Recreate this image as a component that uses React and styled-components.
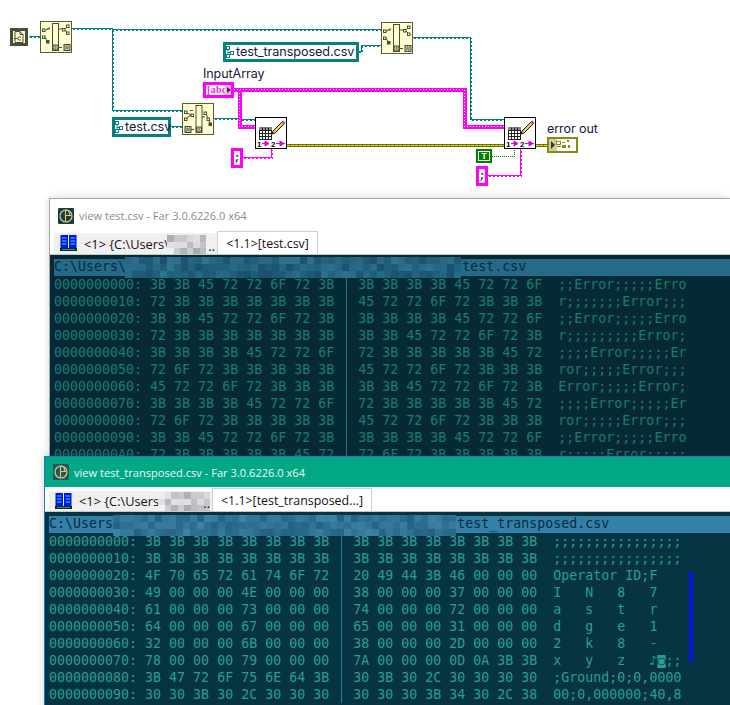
import React from 'react';
import styled, { createGlobalStyle } from 'styled-components';

const Global = createGlobalStyle`
  html, body { margin: 0; padding: 0; background: #fff; }
  body { font-family: "Open Sans", "Liberation Sans", sans-serif; }
`;

const Page = styled.div`
  position: relative;
  width: 730px;
  height: 705px;
  overflow: hidden;
  background: #fff;
`;

/* ---------- block diagram ---------- */
const Diagram = styled.div`
  position: relative;
  height: 198px;
`;
const WireLayer = styled.svg`
  position: absolute;
  inset: 0;
  width: 730px;
  height: 198px;
`;
const Trace = styled.path`
  fill: none;
  stroke: ${p => p.$color};
  stroke-width: ${p => p.$w || 1}px;
  stroke-dasharray: ${p => p.$dash || 'none'};
  stroke-dashoffset: ${p => p.$offset || 0};
  shape-rendering: crispEdges;
`;
const Node = styled.div`
  position: absolute;
  left: ${p => p.$x}px;
  top: ${p => p.$y}px;
  width: ${p => p.$w}px;
  height: ${p => p.$h}px;
  box-sizing: border-box;
  display: flex;
  align-items: center;
  justify-content: center;
`;
const PathNode = styled(Node)`
  background: #ffffcf;
  border: 1px solid #5a5a3c;
`;
const WriteNode = styled(Node)`
  background: #fff;
  border: 1px solid #000;
`;
const StartNode = styled(Node)`
  background: #ffffd4;
  border: 3px solid #4c4c38;
`;
const PathConst = styled(Node)`
  border: 3px solid #0a7f7f;
  background: #fff;
  justify-content: flex-start;
  gap: 2px;
  padding-left: 0;
  font: 400 12.7px/14px Inter, "Open Sans", sans-serif;
  letter-spacing: -0.1px;
  color: #12203a;
  white-space: nowrap;
`;
const Label = styled.div`
  position: absolute;
  left: ${p => p.$x}px;
  top: ${p => p.$y}px;
  font: 400 12.6px/15px Inter, "Open Sans", sans-serif;
  letter-spacing: -0.1px;
  color: #12203a;
  white-space: nowrap;
`;
const ArrayConst = styled(Node)`
  border: 3px solid #ff00ff;
  background: #fff;
  justify-content: flex-start;
  padding-left: 1px;
  color: #ee22ee;
  font: 700 10px/10px "Liberation Serif", serif;
  letter-spacing: 0.3px;
  white-space: nowrap;
`;
const ArrayArrow = styled.span`
  position: absolute;
  right: 0;
  top: 0;
  bottom: 0;
  width: 6px;
  background: #ffb0ff;
  display: flex;
  align-items: center;
  justify-content: flex-end;
  &::after {
    content: "";
    border-left: 4px solid #333;
    border-top: 3px solid transparent;
    border-bottom: 3px solid transparent;
  }
`;
const SemiConst = styled(Node)`
  border: 3px solid #ff00ff;
  background: #fff;
  color: #222;
  font: 700 11px/12px "Liberation Mono", monospace;
`;
const BoolConst = styled(Node)`
  background: #007f00;
  border: 2px solid #007f00;
  color: #fff;
  font: 700 8.5px/9px "Liberation Sans", sans-serif;
  &::before {
    content: "";
    position: absolute;
    inset: 0;
    border: 1px solid #fff;
  }
`;
const ErrorTerm = styled(Node)`
  border: 1px solid #8a8a10;
  outline: 1px solid #8a8a10;
  outline-offset: -2px;
  background: #fff;
`;

/* ---------- Far windows ---------- */
const Window = styled.section`
  position: absolute;
  left: ${p => p.$x}px;
  top: ${p => p.$y}px;
  right: 0;
  bottom: ${p => p.$bottom}px;
  box-sizing: border-box;
  display: flex;
  flex-direction: column;
  background: #fff;
  border: 1px solid ${p => (p.$active ? '#1f78d8' : '#a8a8a8')};
  border-right: 0;
  border-bottom: 0;
  box-shadow: 0 0 9px rgba(0, 0, 0, 0.16);
`;
const TitleBar = styled.header`
  flex: none;
  height: ${p => p.$h}px;
  display: flex;
  align-items: center;
  gap: 5px;
  padding-left: 8px;
  background: ${p => (p.$active ? '#02a884' : '#fff')};
  color: ${p => (p.$active ? '#eafaf5' : '#8c8c8c')};
  font-size: 11.1px;
  white-space: nowrap;
`;
const TabStrip = styled.nav`
  flex: none;
  height: ${p => p.$h}px;
  display: flex;
  align-items: flex-end;
  padding-left: 4px;
  background: #fff;
  border-bottom: 1px solid #c8c8c8;
  box-sizing: border-box;
`;
const PassiveTab = styled.div`
  width: 163px;
  height: ${p => p.$h}px;
  box-sizing: border-box;
  background: #f0f0f0;
  display: flex;
  align-items: center;
  position: relative;
  padding-left: 6px;
  gap: 7px;
  font-size: 12.8px;
  color: #111;
  white-space: nowrap;
  overflow: hidden;
`;
const ActiveTab = styled.div`
  width: ${p => p.$w}px;
  height: ${p => p.$h}px;
  box-sizing: border-box;
  background: #fff;
  border: 1px solid #cfcfcf;
  border-bottom: 0;
  display: flex;
  align-items: center;
  justify-content: center;
  font-size: 12.4px;
  color: #111;
  white-space: nowrap;
`;
const Ellipsis = styled.span`
  position: absolute;
  right: 2px;
  bottom: 2px;
  line-height: 12px;
`;
const Viewer = styled.main`
  flex: 1;
  min-height: 0;
  overflow: hidden;
  background: ${p => (p.$active ? '#063443' : '#052a36')};
  color: ${p => (p.$active ? '#2a9e90' : '#1c7c72')};
  padding: 4px 0 0 4px;
  font: 400 13.3px/17px "DejaVu Sans Mono", monospace;
`;
const PathBar = styled.div`
  position: relative;
  height: 17px;
  line-height: 15px;
  background: ${p => (p.$active ? '#3380a8' : '#256a88')};
  color: #0b2a3c;
  white-space: pre;
`;
const Mosaic = styled.div`
  position: absolute;
  left: ${p => p.$left}px;
  top: ${p => p.$top}px;
  display: grid;
  grid-template-columns: repeat(${p => p.$cols}, ${p => p.$size}px);
  grid-auto-rows: ${p => p.$size}px;
`;
const Pixel = styled.i`
  display: block;
`;
const HexRow = styled.div`
  display: flex;
  height: 17px;
  white-space: pre;
`;
const Cell = styled.span`
  flex: none;
  width: ${p => p.$ch}ch;
`;
const Divider = styled.span`
  flex: none;
  width: 1ch;
  position: relative;
  &::after {
    content: "";
    position: absolute;
    left: 50%;
    top: 0;
    bottom: 0;
    width: 1px;
    background: ${p => (p.$active ? '#1f7f96' : '#257a86')};
  }
`;
const ScrollMark = styled.div`
  position: absolute;
  left: 689px;
  top: 572px;
  width: 4px;
  height: 91px;
  background: #0818e4;
`;

/* ---------- wires ---------- */
const Wire = ({ d, color }) => (
  <>
    <Trace d={d} $color={color} />
    <Trace d={d} $color={color} $dash="2 2" transform="translate(1 1)" />
  </>
);
const ThickPink = ({ d }) => (
  <>
    <Trace d={d} $color="#ff00ff" $w={4} />
    <Trace d={d} $color="#ffffff" $dash="1 2" />
  </>
);
const ErrorWire = ({ d }) => (
  <>
    <Trace d={d} $color="#6e6e00" $w={3} />
    <Trace d={d} $color="#e6e610" $dash="3 1" />
  </>
);

const Wires = () => (
  <WireLayer viewBox="0 0 730 198">
    <Wire color="#007f7f" d="M28.5 36.5H40" />
    <Wire color="#007f7f" d="M72 28.5H112.5V29.5H381" />
    <Wire color="#007f7f" d="M112.5 29V110.5H182" />
    <Wire color="#007f7f" d="M358 51.5H361.5V45.5H381" />
    <Wire color="#007f7f" d="M171 126.5H182" />
    <Wire color="#007f7f" d="M214 118.5H240V119.5H256" />
    <Wire color="#007f7f" d="M413 37.5H470.5V119.5H504" />
    <ThickPink d="M234 89.5H464.5V126.5H504" />
    <ThickPink d="M239.5 89.5V126.5H255" />
    <Wire color="#ff00ff" d="M243 157.5H271.5V149" />
    <Wire color="#ff00ff" d="M488 175.5H520.5V149" />
    <Trace d="M492 156.5H514.5V149" $color="#007f00" $dash="1 1" />
    <ErrorWire d="M287 145.5H504" />
    <ErrorWire d="M536 145.5H547" />
  </WireLayer>
);

/* ---------- icons ---------- */
const ink = '#4c4c30';
const Checker = ({ x, y, s = 6 }) => (
  <g>
    <rect x={x} y={y} width={s} height={s} fill="#8a8a70" stroke={ink} strokeWidth="1" />
    <rect x={x + 1} y={y + 1} width={s - 2} height={s - 2} fill="none" stroke="#e4e4c8" strokeDasharray="1 1" />
  </g>
);
const Sq = ({ x, y, fill }) => (
  <rect x={x} y={y} width="2.5" height="2.5" fill={fill ? ink : 'none'} stroke={ink} strokeWidth="1" />
);
const Arrow = ({ x, y }) => <path d={`M${x} ${y}h3M${x + 2} ${y - 2.5}l3 2.5-3 2.5z`} fill={ink} stroke={ink} strokeWidth="1" />;

const BuildPathIcon = () => (
  <svg width="30" height="30" viewBox="1 1 30 30">
    <Sq x="2.5" y="8" /><Sq x="2.5" y="15" /><Sq x="6.5" y="19.5" fill />
    <path d="M5 9.5l5-3M5 16l2 4" stroke={ink} fill="none" />
    <Arrow x="7" y="8" />
    <rect x="12.5" y="2.5" width="6" height="27" fill="#ffffcf" stroke={ink} />
    <Checker x={13} y={24} s={5} />
    <Arrow x="19" y="8" />
    <Sq x="26.5" y="4" /><Sq x="26.5" y="11" /><Sq x="22.5" y="7.5" />
    <path d="M25 8l2-2M25 9l2 2" stroke={ink} fill="none" />
    <Arrow x="19" y="26.5" />
    <Checker x={24} y={23.5} />
  </svg>
);
const StripPathIcon = () => (
  <svg width="30" height="30" viewBox="1 1 30 30">
    <Sq x="2.5" y="8" /><Sq x="2.5" y="15" /><Sq x="9" y="11" />
    <path d="M5 15l4-3M5 10l4 2" stroke={ink} fill="none" />
    <Arrow x="8" y="7.5" />
    <rect x="14" y="2.5" width="6" height="27" fill="#ffffcf" stroke={ink} />
    <Checker x={14.5} y={24} s={5} />
    <Checker x={3} y={23.5} />
    <Arrow x="9" y="26.5" />
    <Arrow x="20" y="14" />
    <Sq x="22" y="9" /><Sq x="25" y="15" /><Sq x="27" y="20" fill />
    <path d="M24 11l2 4M27 17l1 3" stroke={ink} fill="none" />
  </svg>
);
const WriteIcon = () => (
  <svg width="30" height="30" viewBox="1 1 30 30">
    <rect x="4.5" y="10.5" width="12" height="12" fill="#fff" stroke="#222" />
    <rect x="4" y="10" width="13" height="3" fill="#888" />
    <path d="M4.5 13.5h12M4.5 16.5h12M4.5 19.5h12M7.5 10.5v12M10.5 10.5v12M13.5 10.5v12" stroke="#222" />
    <path d="M18 14l10-10 2 2-10 10-3 1z" fill="#e8d840" stroke="#111" strokeWidth="1" />
    <path d="M26.5 5.5l2-2 2 2-2 2z" fill="#e050b0" />
    <text x="2" y="30" fontFamily="Liberation Sans, sans-serif" fontWeight="700" fontSize="8" fill="#000">1</text>
    <path d="M7 26.5h7M10 24v5l4-2.5z" stroke="#e000e0" fill="#e000e0" />
    <text x="16" y="30" fontFamily="Liberation Sans, sans-serif" fontWeight="700" fontSize="8" fill="#000">2</text>
    <path d="M21 26.5h9M25 24v5l4-2.5z" stroke="#e000e0" fill="#e000e0" />
  </svg>
);
const DocIcon = () => (
  <svg width="12" height="12" viewBox="0 0 12 12">
    <path d="M2 .5h5l3 3v8H2zM7 .5v3h3" fill="#ffffd4" stroke="#4c4c38" />
    <path d="M8 6H6L4 7.5 6 9h2M1 7.5h3" fill="none" stroke="#4c4c38" />
  </svg>
);
const PathGlyph = () => (
  <svg width="8" height="12" viewBox="0 0 8 12" style={{ flex: 'none' }}>
    <rect x="0.5" y="0.5" width="3" height="3" fill="none" stroke="#0a7f7f" />
    <rect x="0.5" y="8.5" width="3" height="3" fill="none" stroke="#0a7f7f" />
    <rect x="4.5" y="5.5" width="3" height="3" fill="none" stroke="#0a7f7f" />
    <path d="M2 3.5v5M2 6.5h2.5" stroke="#0a7f7f" />
  </svg>
);
const ErrorIcon = () => (
  <svg width="29" height="14" viewBox="0 0 29 14">
    <rect x="0" y="0" width="9" height="14" fill="#cfcf9a" />
    <path d="M3 3v8l4-4z" fill="#333" />
    <rect x="8.5" y="3.5" width="4" height="3" fill="none" stroke="#8a8a10" />
    <rect x="14" y="4" width="3" height="1" fill="#8a8a10" />
    <rect x="19" y="2" width="2" height="2" fill="#8a8a10" />
    <rect x="9" y="8" width="4" height="1" fill="#8a8a10" />
    <rect x="14" y="7" width="4" height="3" fill="#8a8a10" />
    <rect x="20" y="7" width="2" height="3" fill="#8a8a10" />
  </svg>
);
const FarLogo = ({ active }) => (
  <svg width="16" height="16" viewBox="0 0 16 16" style={{ flex: 'none' }}>
    <rect width="16" height="16" rx="1" fill={active ? '#1d5668' : '#123e52'} />
    <circle cx="8" cy="8" r="6" fill="none" stroke="#e8c860" strokeWidth="1.2" />
    <path d="M7.5 2v12M7.5 7.5h6M7.5 2a4 4 0 0 1 4 4v1.5" fill="none" stroke="#e8c860" strokeWidth="1.1" />
  </svg>
);
const PanelIcon = () => (
  <svg width="17" height="17" viewBox="0 0 17 17" style={{ flex: 'none' }}>
    <rect x="0.5" y="0" width="7.5" height="13" fill="#0014e8" />
    <rect x="9" y="0" width="7.5" height="13" fill="#0014e8" />
    <path d="M2 3h4.5M2 6h4.5M2 9h4.5M10.5 3H15M10.5 6H15M10.5 9H15" stroke="#38e0f0" />
    <rect x="0" y="13" width="17" height="3" fill="#0d2a2a" />
    <rect x="2" y="14" width="13" height="1" fill="#28a060" />
  </svg>
);

/* ---------- data ---------- */
const seeded = i => {
  const v = Math.sin(i * 12.9898 + 4.1) * 43758.5453;
  return v - Math.floor(v);
};
const PixelBand = ({ left, top, cols, rows, size, base, spread, grey }) => {
  const cells = [];
  for (let i = 0; i < cols * rows; i++) {
    const k = (seeded(i + left) - 0.5) * spread;
    const c = grey
      ? `rgb(${base[0] + k},${base[1] + k},${base[2] + k})`
      : `rgb(${base[0] + k * 0.7},${base[1] + k},${base[2] + k})`;
    cells.push(<Pixel key={i} style={{ background: c }} />);
  }
  return <Mosaic $left={left} $top={top} $cols={cols} $size={size}>{cells}</Mosaic>;
};

const rowsOld = [
  ['0000000000', '3B 3B 45 72 72 6F 72 3B', '3B 3B 3B 3B 45 72 72 6F', ';;Error;;;;;Erro'],
  ['0000000010', '72 3B 3B 3B 3B 3B 3B 3B', '45 72 72 6F 72 3B 3B 3B', 'r;;;;;;;Error;;;'],
  ['0000000020', '3B 3B 45 72 72 6F 72 3B', '3B 3B 3B 3B 45 72 72 6F', ';;Error;;;;;Erro'],
  ['0000000030', '72 3B 3B 3B 3B 3B 3B 3B', '3B 3B 45 72 72 6F 72 3B', 'r;;;;;;;;;Error;'],
  ['0000000040', '3B 3B 3B 3B 45 72 72 6F', '72 3B 3B 3B 3B 3B 45 72', ';;;;Error;;;;;Er'],
  ['0000000050', '72 6F 72 3B 3B 3B 3B 3B', '45 72 72 6F 72 3B 3B 3B', 'ror;;;;;Error;;;'],
  ['0000000060', '45 72 72 6F 72 3B 3B 3B', '3B 3B 45 72 72 6F 72 3B', 'Error;;;;;Error;'],
  ['0000000070', '3B 3B 3B 3B 45 72 72 6F', '72 3B 3B 3B 3B 3B 45 72', ';;;;Error;;;;;Er'],
  ['0000000080', '72 6F 72 3B 3B 3B 3B 3B', '45 72 72 6F 72 3B 3B 3B', 'ror;;;;;Error;;;'],
  ['0000000090', '3B 3B 45 72 72 6F 72 3B', '3B 3B 3B 3B 45 72 72 6F', ';;Error;;;;;Erro'],
  ['00000000A0', '72 3B 3B 3B 3B 3B 45 72', '72 6F 72 3B 3B 3B 3B 3B', 'r;;;;;Error;;;;;'],
];
const rowsNew = [
  ['0000000000', '3B 3B 3B 3B 3B 3B 3B 3B', '3B 3B 3B 3B 3B 3B 3B 3B', ';;;;;;;;;;;;;;;;'],
  ['0000000010', '3B 3B 3B 3B 3B 3B 3B 3B', '3B 3B 3B 3B 3B 3B 3B 3B', ';;;;;;;;;;;;;;;;'],
  ['0000000020', '4F 70 65 72 61 74 6F 72', '20 49 44 3B 46 00 00 00', 'Operator ID;F'],
  ['0000000030', '49 00 00 00 4E 00 00 00', '38 00 00 00 37 00 00 00', 'I   N   8   7'],
  ['0000000040', '61 00 00 00 73 00 00 00', '74 00 00 00 72 00 00 00', 'a   s   t   r'],
  ['0000000050', '64 00 00 00 67 00 00 00', '65 00 00 00 31 00 00 00', 'd   g   e   1'],
  ['0000000060', '32 00 00 00 6B 00 00 00', '38 00 00 00 2D 00 00 00', '2   k   8   -'],
  ['0000000070', '78 00 00 00 79 00 00 00', '7A 00 00 00 0D 0A 3B 3B', 'x   y   z   ♪◙;;'],
  ['0000000080', '3B 47 72 6F 75 6E 64 3B', '30 3B 30 2C 30 30 30 30', ';Ground;0;0,0000'],
  ['0000000090', '30 30 3B 30 2C 30 30 30', '30 30 30 3B 34 30 2C 38', '00;0,000000;40,8'],
];

const Far = ({ x, y, bottom, active, title, tabText, tabActive, tabW, path, rows, band, tabBand, titleH, stripH, tabH, activeH }) => (
  <Window $x={x} $y={y} $bottom={bottom} $active={active}>
    <TitleBar $h={titleH} $active={active}>
      <FarLogo active={active} />
      <span>{title}</span>
    </TitleBar>
    <TabStrip $h={stripH}>
      <PassiveTab $h={tabH}>
        <PanelIcon />
        <span>{tabText}</span>
        <PixelBand {...tabBand} grey />
        <Ellipsis>..</Ellipsis>
      </PassiveTab>
      <ActiveTab $w={tabW} $h={activeH}>{tabActive}</ActiveTab>
    </TabStrip>
    <Viewer $active={active}>
      <PathBar $active={active}>
        {path}
        <PixelBand {...band} />
      </PathBar>
      {rows.map(r => (
        <HexRow key={r[0]}>
          <Cell $ch={36}>{r[0]}: {r[1]}</Cell>
          <Divider $active={active} />
          <Cell $ch={26}> {r[2]}</Cell>
          <Cell $ch={16}>{r[3]}</Cell>
        </HexRow>
      ))}
    </Viewer>
  </Window>
);

export default function App() {
  return (
    <Page>
      <Global />
      <Diagram>
        <Wires />
        <StartNode $x={10} $y={28} $w={18} $h={18}><DocIcon /></StartNode>
        <PathNode $x={40} $y={21} $w={32} $h={32}><BuildPathIcon /></PathNode>
        <PathNode $x={381} $y={22} $w={32} $h={32}><BuildPathIcon /></PathNode>
        <PathNode $x={182} $y={103} $w={32} $h={32}><StripPathIcon /></PathNode>
        <PathConst $x={223} $y={42} $w={136} $h={20}><PathGlyph />test_transposed.csv</PathConst>
        <PathConst $x={112} $y={117} $w={59} $h={20}><PathGlyph />test.csv</PathConst>
        <Label $x={203} $y={66}>InputArray</Label>
        <ArrayConst $x={203} $y={82} $w={31} $h={16}>[abc]<ArrayArrow /></ArrayConst>
        <WriteNode $x={255} $y={117} $w={32} $h={32}><WriteIcon /></WriteNode>
        <WriteNode $x={504} $y={117} $w={32} $h={32}><WriteIcon /></WriteNode>
        <SemiConst $x={231} $y={148} $w={12} $h={20}>;</SemiConst>
        <SemiConst $x={476} $y={166} $w={12} $h={20}>;</SemiConst>
        <BoolConst $x={476} $y={149} $w={16} $h={14}>T</BoolConst>
        <Label $x={547} $y={121}>error out</Label>
        <ErrorTerm $x={547} $y={137} $w={31} $h={16}><ErrorIcon /></ErrorTerm>
      </Diagram>

      <Far
        x={49} y={198} bottom={205} active={false}
        title="view test.csv - Far 3.0.6226.0 x64"
        tabText="<1> {C:\Users\"
        tabActive="<1.1>[test.csv]" tabW={101}
        titleH={33} stripH={23} tabH={21} activeH={23}
        path={'C:\\Users\\' + ' '.repeat(41) + '\\test.csv'}
        rows={rowsOld}
        band={{ left: 71, top: -2, cols: 48, rows: 3, size: 7, base: [36, 98, 128], spread: 34 }}
        tabBand={{ left: 113, top: 2, cols: 6, rows: 3, size: 6.5, base: [205, 205, 208], spread: 70 }}
      />
      <Far
        x={44} y={456} bottom={-20} active
        title="view test_transposed.csv - Far 3.0.6226.0 x64"
        tabText="<1> {C:\Users"
        tabActive="<1.1>[test_transposed...]" tabW={160}
        titleH={30} stripH={25} tabH={20} activeH={23}
        path={'C:\\Users\\' + ' '.repeat(41) + '\\test_transposed.csv'}
        rows={rowsNew}
        band={{ left: 64, top: -1, cols: 49, rows: 3, size: 7, base: [48, 114, 148], spread: 34 }}
        tabBand={{ left: 109, top: 1, cols: 8, rows: 3, size: 6.5, base: [205, 205, 210], spread: 70 }}
      />
      <ScrollMark />
    </Page>
  );
}
